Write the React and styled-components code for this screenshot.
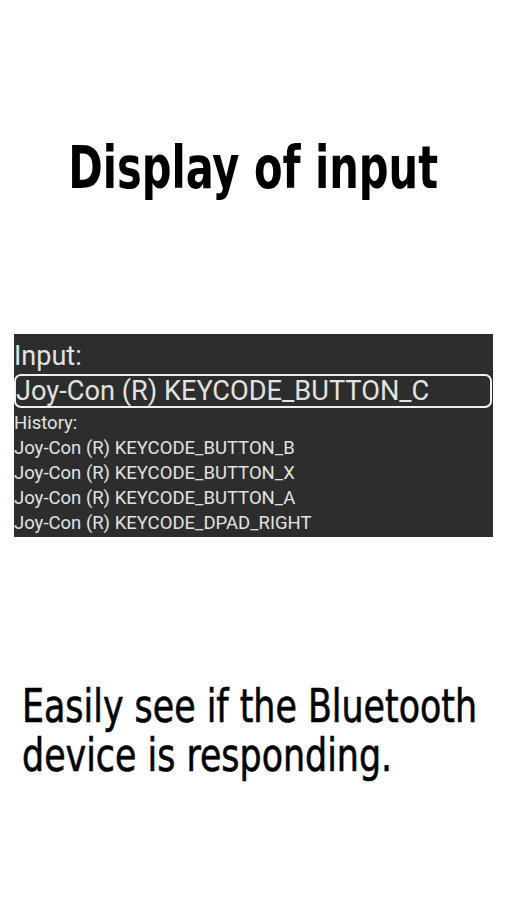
import React from "react";
import styled, { createGlobalStyle } from "styled-components";

const GlobalStyle = createGlobalStyle`
  html, body {
    margin: 0;
    padding: 0;
    background: #ffffff;
  }
`;

const history = [
  "Joy-Con (R) KEYCODE_BUTTON_B",
  "Joy-Con (R) KEYCODE_BUTTON_X",
  "Joy-Con (R) KEYCODE_BUTTON_A",
  "Joy-Con (R) KEYCODE_DPAD_RIGHT",
];

function App() {
  return (
    <Page>
      <GlobalStyle />
      <Title>
        <TitleText>Display of input</TitleText>
      </Title>
      <Panel>
        <Label>Input:</Label>
        <InputBox>Joy-Con (R) KEYCODE_BUTTON_C</InputBox>
        <HistoryLabel>History:</HistoryLabel>
        <HistoryList>
          {history.map((item) => (
            <HistoryRow key={item}>{item}</HistoryRow>
          ))}
        </HistoryList>
      </Panel>
      <Caption>
        <CaptionLine>Easily see if the Bluetooth</CaptionLine>
        <CaptionLine>device is responding.</CaptionLine>
      </Caption>
    </Page>
  );
}

export default App;

const Page = styled.div`
  width: 506px;
  height: 900px;
  display: flex;
  flex-direction: column;
  background: #ffffff;
  overflow: hidden;
`;

const Title = styled.h1`
  margin: 133px 0 0;
  display: flex;
  justify-content: center;
  font-family: "DejaVu Sans Condensed", "DejaVu Sans", sans-serif;
  font-weight: bold;
  font-size: 59px;
  line-height: 70px;
  color: #000;
`;

const TitleText = styled.span`
  display: inline-block;
  white-space: nowrap;
  transform: scaleX(0.783);
  transform-origin: center;
`;

const Panel = styled.div`
  margin: 131px 13px 0 14px;
  height: 203px;
  padding-top: 7px;
  box-sizing: border-box;
  background: #2d2d2d;
  display: flex;
  flex-direction: column;
  font-family: Roboto, "Liberation Sans", sans-serif;
  color: #e2e2e2;
`;

const Label = styled.div`
  font-size: 27px;
  line-height: 30px;
`;

const InputBox = styled.div`
  margin: 3px 1px 0 0;
  height: 34px;
  box-sizing: border-box;
  border: 2px solid #f0f0f0;
  border-radius: 7px;
  font-size: 27.2px;
  line-height: 30px;
  white-space: nowrap;
`;

const HistoryLabel = styled.div`
  margin-top: 3px;
  font-size: 18.5px;
  line-height: 25px;
`;

const HistoryList = styled.div`
  display: flex;
  flex-direction: column;
`;

const HistoryRow = styled.div`
  font-size: 18.5px;
  line-height: 25px;
  white-space: nowrap;
`;

const Caption = styled.div`
  margin: 145px 0 0 22px;
  display: flex;
  flex-direction: column;
  align-items: flex-start;
  font-family: "DejaVu Sans Condensed", "DejaVu Sans", sans-serif;
  font-size: 46px;
  line-height: 49px;
  color: #000;
  -webkit-text-stroke: 0.6px #000;
`;

const CaptionLine = styled.span`
  display: inline-block;
  white-space: nowrap;
  transform: scaleX(0.842);
  transform-origin: left center;
`;
